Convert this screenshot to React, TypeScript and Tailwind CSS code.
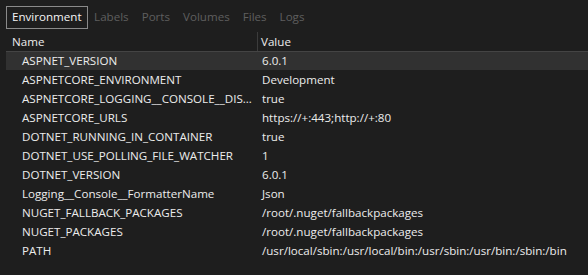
import React from "react";

const rows: [string, string][] = [
  ["ASPNET_VERSION", "6.0.1"],
  ["ASPNETCORE_ENVIRONMENT", "Development"],
  ["ASPNETCORE_LOGGING__CONSOLE__DISABLECOLORS", "true"],
  ["ASPNETCORE_URLS", "https://+:443;http://+:80"],
  ["DOTNET_RUNNING_IN_CONTAINER", "true"],
  ["DOTNET_USE_POLLING_FILE_WATCHER", "1"],
  ["DOTNET_VERSION", "6.0.1"],
  ["Logging__Console__FormatterName", "Json"],
  ["NUGET_FALLBACK_PACKAGES", "/root/.nuget/fallbackpackages"],
  ["NUGET_PACKAGES", "/root/.nuget/fallbackpackages"],
  ["PATH", "/usr/local/sbin:/usr/local/bin:/usr/sbin:/usr/bin:/sbin:/bin"],
];

const tabs = ["Environment", "Labels", "Ports", "Volumes", "Files", "Logs"];

export default function App() {
  return (
    <div
      className="w-[588px] h-[275px] bg-[#1e1e1e] text-[11.6px] text-[#ececec] overflow-hidden"
      style={{ fontFamily: '"Open Sans", "Noto Sans", sans-serif' }}
    >
      <div className="flex items-center pl-[6px] pt-[6px] h-[28px]">
        {tabs.map((t, i) => (
          <div
            key={t}
            className={
              i === 0
                ? "h-[23px] px-[5px] flex items-center border border-[#8a8a8a] text-[#f4f4f4]"
                : "h-[23px] px-[6.5px] flex items-center text-[#5f5f5f]"
            }
          >
            {t}
          </div>
        ))}
      </div>
      <div className="flex h-[19px] mt-[4px] items-center">
        <div className="w-[258px] pl-[12px] border-r border-[#3c3c3c] h-full flex items-center">Name</div>
        <div className="pl-[3px]">Value</div>
      </div>
      <div className="ml-[6px]">
        {rows.map(([k, v], i) => (
          <div
            key={k}
            className={
              "flex h-[19px] items-center " +
              (i === 0 ? "bg-[#313131] border-t border-[#444444]" : "")
            }
          >
            <div className="w-[254px] pl-[16px] pr-[1px] truncate">{k}</div>
            <div className="pl-[2px] whitespace-nowrap">{v}</div>
          </div>
        ))}
      </div>
    </div>
  );
}
